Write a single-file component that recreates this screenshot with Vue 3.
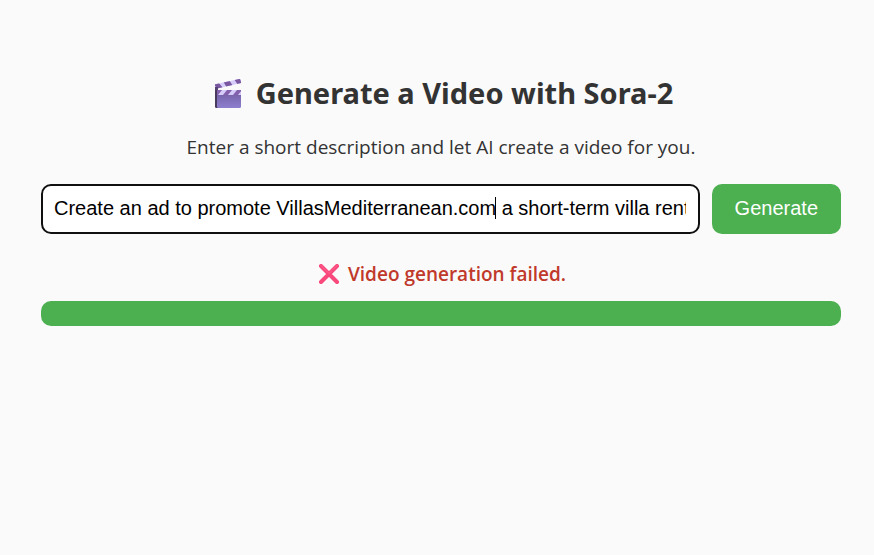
<script setup>
import { ref, onMounted } from 'vue'

const prompt = ref('Create an ad to promote VillasMediterranean.com a short-term villa rental')
const promptInput = ref(null)
const caretIndex = ref(prompt.value.indexOf('.com') + 4)
const caretLeft = ref(0)

function placeCaret() {
  const style = getComputedStyle(promptInput.value)
  const context = document.createElement('canvas').getContext('2d')
  context.font = `${style.fontSize} ${style.fontFamily}`
  const width = context.measureText(prompt.value.slice(0, caretIndex.value)).width
  caretLeft.value = Math.floor(parseFloat(style.paddingLeft) + width) + 1
}

function trackCaret() {
  caretIndex.value = promptInput.value.selectionStart
  placeCaret()
}

onMounted(placeCaret)
</script>

<template>
  <main class="page">
    <h1 class="title">
      <svg class="clapper" viewBox="0 0 30 30" aria-hidden="true">
        <defs>
          <linearGradient id="board" x1="0" y1="0" x2="0" y2="1">
            <stop offset="0" stop-color="#705aa0" />
            <stop offset="1" stop-color="#8d7fce" />
          </linearGradient>
          <clipPath id="arm"><path d="M1.3 6.3 25.2 1.1q1-.2 1.2.7l.6 2.3q.2.9-.7 1.1L3.2 10.4q-1 .2-1.3-.7L1 7.4q-.3-.9.3-1.1z" /></clipPath>
          <clipPath id="strip"><path d="M3 12h24v5H3z" /></clipPath>
        </defs>
        <path d="M1 12h3v18H2.200Q1 30 1 28.500z" fill="#493b60" />
        <path d="M3 12h24v16.500q0 1.500-1.500 1.500H4.500Q3 30 3 28.500z" fill="url(#board)" />
        <g clip-path="url(#arm)">
          <path d="M0 0h30v12H0z" fill="#d6ccfa" />
          <path d="M-1 5l5-1 5 6-6 2zM9 3l6-1 4 6-6 2zM20 1l6-1 4 6-6 1z" fill="#7958a0" />
        </g>
        <g clip-path="url(#strip)">
          <path d="M3 12h24v5H3z" fill="#d6ccfa" />
          <path d="M2 12h6l-4 5H2zM13 12h5l-4 5H9zM23 12h5l-4 5h-5z" fill="#8560ad" />
        </g>
        <path d="M1 9h3v3H1z" fill="#594373" />
      </svg>
      <span>Generate a Video with Sora-2</span>
    </h1>
    <p class="intro">Enter a short description and let AI create a video for you.</p>

    <form class="prompt-form" @submit.prevent>
      <div class="field">
        <input
          ref="promptInput"
          v-model="prompt"
          class="prompt"
          type="text"
          aria-label="Video description"
          @click="trackCaret"
          @keyup="trackCaret"
        />
        <span class="caret" :style="{ left: caretLeft + 'px' }"></span>
      </div>
      <button class="generate" type="submit">Generate</button>
    </form>

    <p class="status" role="alert">
      <svg class="cross" viewBox="0 0 22 22" aria-hidden="true">
        <path d="M3 2 19 18M19 2 3 18" fill="none" stroke="#f8487c" stroke-width="4" stroke-linecap="round" />
        <path d="M3 1.500 11 9.500 19 1.500" fill="none" stroke="#ff6590" stroke-width="1" stroke-linecap="round" />
      </svg>
      <span>Video generation failed.</span>
    </p>
    <div class="progress" role="progressbar" aria-label="Video generation" aria-valuenow="100">
      <div class="progress-fill"></div>
    </div>
  </main>
</template>

<style>
body {
  background: #fafafa;
}
</style>

<style scoped>
.page {
  box-sizing: border-box;
  max-width: 874px;
  margin: 0 auto;
  padding: 71px 33px 40px 41px;
  color: #333;
  font-family: "Segoe UI", "Open Sans", "Noto Sans", sans-serif;
}

.title {
  display: flex;
  align-items: center;
  justify-content: center;
  gap: 12px;
  margin: 0;
  padding-left: 5px;
  font-family: "Segoe UI", "Noto Sans", sans-serif;
  font-size: 29px;
  font-weight: 700;
  line-height: 44px;
  white-space: nowrap;
}

.clapper {
  width: 30px;
  height: 30px;
  flex: none;
}

.intro {
  margin: 19px 0 24px;
  font-size: 19px;
  line-height: 26px;
  text-align: center;
}

.prompt-form {
  display: flex;
  gap: 12px;
}

.field {
  position: relative;
  flex: 1;
  min-width: 0;
}

.prompt {
  box-sizing: border-box;
  display: block;
  width: 100%;
  height: 50px;
  padding: 0 12px 2px 11px;
  border: 2px solid #101010;
  border-radius: 10px;
  outline: none;
  background: #fff;
  color: #000;
  caret-color: transparent;
  font-family: Arial, "Liberation Sans", sans-serif;
  font-size: 20px;
}

.caret {
  position: absolute;
  top: 13px;
  width: 1px;
  height: 22px;
  background: #000;
  pointer-events: none;
}

.generate {
  height: 50px;
  padding: 0 23px 2px;
  border: 0;
  border-radius: 10px;
  background: #4caf50;
  color: #fff;
  font-family: Arial, "Liberation Sans", sans-serif;
  font-size: 20px;
  cursor: pointer;
}

.status {
  display: flex;
  align-items: center;
  justify-content: center;
  gap: 8px;
  margin: 27px 0 13px;
  padding-left: 2px;
  color: #c0392b;
  font-size: 19px;
  font-weight: 600;
  line-height: 27px;
}

.cross {
  width: 22px;
  height: 22px;
  flex: none;
}

.progress {
  height: 25px;
  overflow: hidden;
  border-radius: 10px;
  background: #ddd;
}

.progress-fill {
  height: 100%;
  background: #4caf50;
}
</style>
